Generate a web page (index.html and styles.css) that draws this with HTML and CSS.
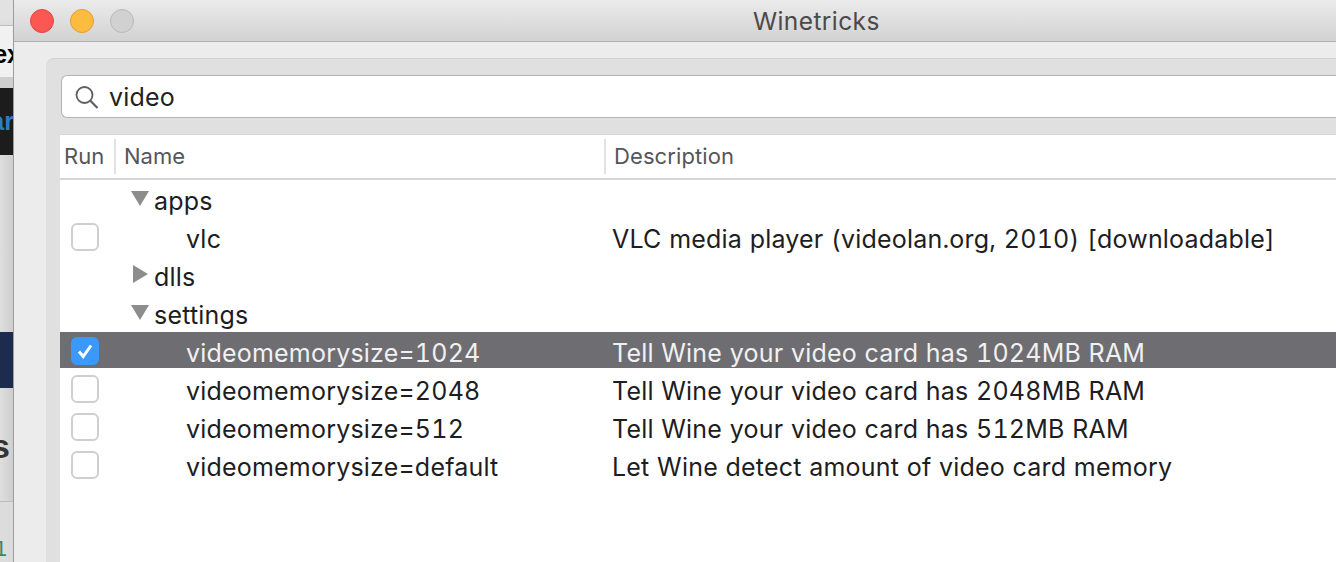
FILE: index.html
```html
<!DOCTYPE html>
<html lang="en">
<head>
<meta charset="utf-8">
<title>Winetricks</title>
<link rel="stylesheet" href="styles.css">
</head>
<body>
<div class="screen">
  <div class="behind">
    <div class="seg seg-top"></div>
    <div class="seg seg-ex"><span>ex</span></div>
    <div class="seg seg-black"><span>ar</span></div>
    <div class="seg seg-grey"></div>
    <div class="seg seg-navy"></div>
    <div class="seg seg-s"><span>s</span></div>
    <div class="seg seg-one"><span>1</span></div>
  </div>
  <div class="window">
    <header class="titlebar">
      <div class="lights">
        <span class="light red"></span>
        <span class="light yellow"></span>
        <span class="light off"></span>
      </div>
      <div class="title">Winetricks</div>
    </header>
    <main class="content">
      <section class="panel">
        <div class="search">
          <svg class="search-icon" width="26" height="26" viewBox="0 0 26 26" aria-hidden="true">
            <circle cx="10.5" cy="10" r="8" fill="none" stroke="#5f5f5f" stroke-width="1.8"/>
            <path d="M16.4 15.8 L23.5 23" fill="none" stroke="#5f5f5f" stroke-width="2.2"/>
          </svg>
          <span class="search-text">video</span>
        </div>
        <div class="table">
          <div class="thead">
            <div class="th th-run">Run</div>
            <div class="th th-name">Name</div>
            <div class="th th-desc">Description</div>
          </div>
          <div class="tbody">
            <div class="row">
              <div class="cell-run"></div>
              <div class="cell-name group"><svg class="tri" width="18" height="16" viewBox="0 0 18 16"><path d="M0 0H18L9 15Z" fill="#8d8d8d"/></svg>apps</div>
              <div class="cell-desc"></div>
            </div>
            <div class="row">
              <div class="cell-run"><span class="check"></span></div>
              <div class="cell-name item">vlc</div>
              <div class="cell-desc">VLC media player (videolan.org, 2010) [downloadable]</div>
            </div>
            <div class="row">
              <div class="cell-run"></div>
              <div class="cell-name group"><svg class="tri tri-right" width="18" height="18" viewBox="0 0 18 18"><path d="M2 0L17 9L2 18Z" fill="#8d8d8d"/></svg>dlls</div>
              <div class="cell-desc"></div>
            </div>
            <div class="row">
              <div class="cell-run"></div>
              <div class="cell-name group"><svg class="tri" width="18" height="16" viewBox="0 0 18 16"><path d="M0 0H18L9 15Z" fill="#8d8d8d"/></svg>settings</div>
              <div class="cell-desc"></div>
            </div>
            <div class="row selected">
              <div class="cell-run"><span class="check checked"><svg width="20" height="20" viewBox="0 0 20 20"><path d="M4 10.5L8.2 15.5L16 4.5" fill="none" stroke="#fff" stroke-width="3"/></svg></span></div>
              <div class="cell-name item">videomemorysize=1024</div>
              <div class="cell-desc">Tell Wine your video card has 1024MB RAM</div>
            </div>
            <div class="row">
              <div class="cell-run"><span class="check"></span></div>
              <div class="cell-name item">videomemorysize=2048</div>
              <div class="cell-desc">Tell Wine your video card has 2048MB RAM</div>
            </div>
            <div class="row">
              <div class="cell-run"><span class="check"></span></div>
              <div class="cell-name item">videomemorysize=512</div>
              <div class="cell-desc">Tell Wine your video card has 512MB RAM</div>
            </div>
            <div class="row">
              <div class="cell-run"><span class="check"></span></div>
              <div class="cell-name item">videomemorysize=default</div>
              <div class="cell-desc">Let Wine detect amount of video card memory</div>
            </div>
          </div>
        </div>
      </section>
    </main>
  </div>
</div>
</body>
</html>
```
FILE: styles.css
```css
* { box-sizing: border-box; }
html, body { margin: 0; height: 100%; overflow: hidden; }
body { font-family: Inter, "Liberation Sans", sans-serif; background: #ececec; color: #1d1d22; }

.screen { display: flex; width: 1336px; height: 562px; overflow: hidden; }

/* Sliver of the window behind */
.behind { flex: 0 0 14px; display: flex; flex-direction: column; overflow: hidden; background: #d8d8d8; font-family: "Liberation Sans", sans-serif; font-weight: 700; }
.seg { display: flex; justify-content: flex-end; align-items: center; overflow: hidden; white-space: nowrap; }
.seg-top { height: 26px; background: linear-gradient(#e4e4e4, #dcdcdc); border-top: 16px solid #e2e2e2; border-bottom: 1px solid #bdbdbd; }
.seg-ex { height: 62px; background: #f1f1f1; border-bottom: 11px solid #cfcfcf; font-size: 25px; color: #000; padding-top: 6px; }
.seg-ex span { margin-right: -7px; }
.seg-black { height: 67px; background: #1c1c1c; color: #2a7fc4; font-size: 25px; }
.seg-grey { height: 177px; background: linear-gradient(90deg, #dedede, #cdcdcd); }
.seg-navy { height: 56px; background: #1d2c4e; }
.seg-s { height: 114px; background: linear-gradient(90deg, #dedede, #cdcdcd); border-bottom: 1px solid #bcbcbc; font-size: 34px; color: #333; padding-top: 4px; }
.seg-s span { margin-right: 4px; }
.seg-one { flex: 1; background: #dcdcdc; color: #3d8a57; font-size: 22px; font-weight: 400; align-items: flex-end; }
.seg-one span { margin-right: 7px; }

/* Window */
.window { flex: 0 0 1604px; display: flex; flex-direction: column; background: #ececec; box-shadow: -1px 0 0 #9c9c9c; }

.titlebar { height: 42px; flex: none; display: flex; align-items: center; padding-left: 16px; background: linear-gradient(#ebebeb, #d2d2d2); border-bottom: 1px solid #b1b1b1; }
.lights { display: flex; gap: 16px; }
.light { width: 24px; height: 24px; border-radius: 50%; border: 1px solid; }
.red { background: #fc5753; border-color: #df4744; }
.yellow { background: #fdbc40; border-color: #de9f34; }
.off { background: #d1d1d1; border-color: #b9b9b9; }
.title { margin-left: 619px; font-size: 24.5px; letter-spacing: .4px; color: #4a4a4a; }

.content { flex: 1; padding: 16px 0 0 32px; }
.panel { height: 100%; padding: 16px 0 0 14px; background: #e0e0e0; border-top: 1px solid #d2d2d2; border-top-left-radius: 8px; }

.search { height: 43px; margin-left: 1px; display: flex; align-items: center; padding-left: 12px; background: #fff; border: 1px solid #b4b4b4; border-right: 0; border-radius: 6px 0 0 6px; }
.search-icon { flex: none; margin-top: 3px; }
.search-text { margin-left: 9px; font-size: 25px; letter-spacing: .2px; color: #222; }

.table { margin-top: 16px; height: 429px; background: #fff; border-top: 1px solid #d8d8d8; }
.thead { height: 45px; display: flex; align-items: center; border-bottom: 2px solid #d6d6d6; color: #55555a; font-size: 22px; }
.th { height: 35px; display: flex; align-items: center; padding-bottom: 2px; }
.th-run { width: 54px; padding-left: 4px; }
.th-name { width: 490px; padding-left: 8px; border-left: 2px solid #e2e2e2; }
.th-desc { flex: 1; padding-left: 8px; border-left: 2px solid #e2e2e2; letter-spacing: .1px; }

.tbody { display: flex; flex-direction: column; gap: 2px; }
.row { height: 36px; display: flex; align-items: center; font-size: 25px; letter-spacing: .2px; word-spacing: .7px; font-variant-numeric: tabular-nums; white-space: nowrap; }
.row.selected { background: #6e6d72; color: #f1f1f1; }
.cell-run { flex: 0 0 56px; height: 100%; display: flex; align-items: center; padding-left: 11px; }
.cell-name { flex: 0 0 496px; display: flex; align-items: center; padding-top: 6px; }
.cell-desc { flex: 1; padding-top: 6px; }
.group { padding-left: 15px; }
.item { padding-left: 70px; }
.tri { flex: none; margin-right: 5px; margin-top: -5px; }
.tri-right { margin-top: -6px; }

.check { width: 28px; height: 28px; margin-top: 2px; display: flex; align-items: center; justify-content: center; background: #fff; border: 2px solid #cfcfcf; border-radius: 6px; }
.check.checked { background: #3b99fc; border-color: #3b99fc; }
```
